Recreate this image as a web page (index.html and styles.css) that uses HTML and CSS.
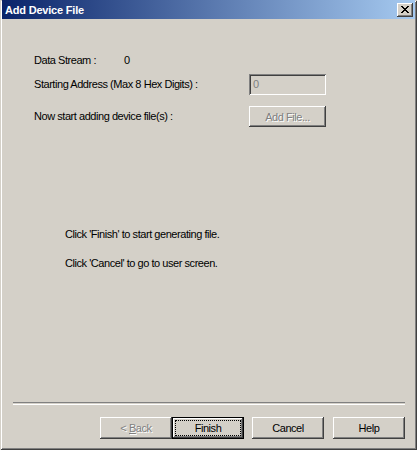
FILE: index.html
```html
<!DOCTYPE html>
<html>
<head>
<meta charset="utf-8">
<title>Add Device File</title>
<link rel="stylesheet" href="styles.css">
</head>
<body>
<div class="window">
  <div class="titlebar">
    <span class="title">Add Device File</span>
    <button class="close" aria-label="Close">
      <svg width="8" height="7" viewBox="0 0 8 7"><path d="M0 0h2v1h1v1h2v-1h1v-1h2v1h-1v1h-1v1h-1v1h1v1h1v1h1v1h-2v-1h-1v-1h-2v1h-1v1h-2v-1h1v-1h1v-1h1v-1h-1v-1h-1v-1h-1z" fill="#000"/></svg>
    </button>
  </div>
  <div class="content">
    <div class="row first">
      <span class="label-short">Data Stream :</span>
      <span>0</span>
    </div>
    <div class="row grid">
      <span class="label">Starting Address (Max 8 Hex Digits) :</span>
      <div class="textbox">0</div>
    </div>
    <div class="row grid third">
      <span class="label">Now start adding device file(s) :</span>
      <button class="btn disabled addfile">Add File...</button>
    </div>
    <div class="messages">
      <p>Click 'Finish' to start generating file.</p>
      <p>Click 'Cancel' to go to user screen.</p>
    </div>
  </div>
  <div class="separator"></div>
  <div class="buttons">
    <button class="btn disabled">&lt; <u>B</u>ack</button>
    <button class="btn default"><span class="focus">Finish</span></button>
    <button class="btn cancel">Cancel</button>
    <button class="btn help">Help</button>
  </div>
</div>
</body>
</html>
```
FILE: styles.css
```css
html, body {
  margin: 0;
  padding: 0;
  background: #d4d0c8;
}
body {
  font-family: "Liberation Sans", Arial, sans-serif;
  font-size: 11px;
  letter-spacing: -0.45px;
  color: #000;
}
.window {
  width: 417px;
  height: 450px;
  box-sizing: border-box;
  display: flex;
  flex-direction: column;
  background: #d4d0c8;
  box-shadow: inset 1px 1px #d4d0c8, inset -1px -1px #404040, inset 2px 2px #fff, inset -2px -2px #808080;
  padding: 0 2px 2px 2px;
}
.titlebar {
  height: 19px;
  display: flex;
  align-items: center;
  justify-content: space-between;
  background: linear-gradient(to right, #0a246a, #a6caf0);
  padding: 0 2px 0 3px;
}
.title {
  color: #fff;
  font-weight: bold;
  font-size: 11px;
  letter-spacing: -0.2px;
}
.close {
  width: 16px;
  height: 14px;
  padding: 0;
  border: 0;
  background: #d4d0c8;
  box-shadow: inset -1px -1px #404040, inset 1px 1px #fff, inset -2px -2px #808080, inset 2px 2px #d4d0c8;
  display: flex;
  align-items: center;
  justify-content: center;
}
.close svg { display: block; margin-left: -1px; }
.content {
  flex: 1;
  padding: 35px 0 0 32px;
  display: flex;
  flex-direction: column;
}
.row {
  display: flex;
  align-items: center;
  line-height: 13px;
}
.label-short { width: 90px; }
.grid {
  display: grid;
  grid-template-columns: 215px 77px;
  align-items: center;
}
.grid:not(.third) { margin-top: 7px; }
.third { margin-top: 11px; }
.textbox {
  height: 21px;
  box-sizing: border-box;
  padding: 3px 4px;
  color: #808080;
  background: #d4d0c8;
  box-shadow: inset 1px 1px #808080, inset -1px -1px #fff, inset 2px 2px #404040, inset -2px -2px #d4d0c8;
  line-height: 15px;
}
.btn {
  font-family: "Liberation Sans", Arial, sans-serif;
  font-size: 11px;
  letter-spacing: -0.45px;
  width: 72px;
  height: 22px;
  padding: 0;
  border: 0;
  background: #d4d0c8;
  color: #000;
  box-shadow: inset -1px -1px #404040, inset 1px 1px #fff, inset -2px -2px #808080, inset 2px 2px #d4d0c8;
}
.btn.disabled {
  color: #808080;
  text-shadow: 1px 1px #fff;
}
.addfile { width: 77px; height: 21px; }
.messages {
  margin-top: 101px;
  padding-left: 31px;
}
.messages p {
  margin: 0 0 16px 0;
  line-height: 13px;
}
.separator {
  margin: 0 10px 0 11px;
  height: 1px;
  border-top: 1px solid #808080;
  border-bottom: 1px solid #fff;
}
.buttons {
  display: flex;
  padding: 12px 0 9px 98px;
}
.btn.default {
  box-shadow: inset 0 0 0 1px #000, inset -2px -2px #404040, inset 2px 2px #fff, inset -3px -3px #808080;
  display: flex;
  align-items: center;
  justify-content: center;
  padding: 4px;
}
.focus {
  flex: 1;
  align-self: stretch;
  display: flex;
  align-items: center;
  justify-content: center;
  outline: 1px dotted #000;
}
.cancel { margin-left: 8px; }
.help { margin-left: 9px; }
```
